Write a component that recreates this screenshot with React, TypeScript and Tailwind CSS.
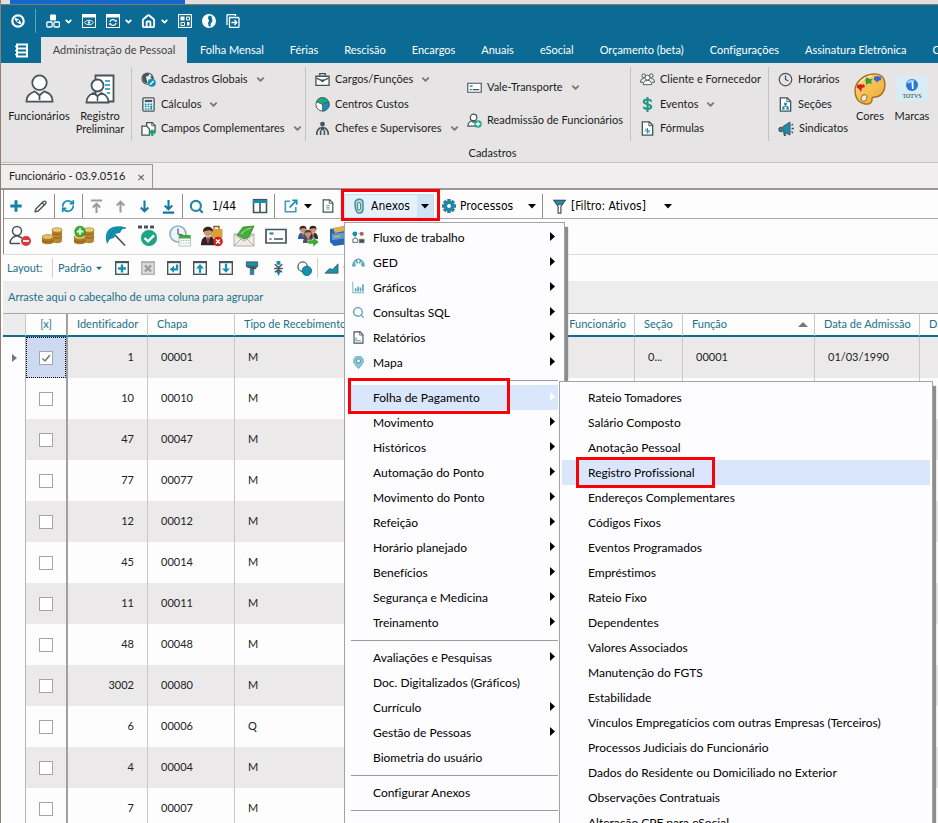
import type { ReactNode } from "react";
import { ChevronDown, Clock, House, Pencil, RefreshCw, Search } from "lucide-react";

const TEAL = "#1690b0";
const DARK = "#45545a";

function Svg({ size = 16, box = 16, children }: { size?: number; box?: number; children: ReactNode }) {
  return (
    <svg width={size} height={size} viewBox={`0 0 ${box} ${box}`} fill="none" className="shrink-0" aria-hidden="true">
      {children}
    </svg>
  );
}

function Caret({ className = "text-black" }: { className?: string }) {
  return (
    <svg width="8" height="5" viewBox="0 0 8 5" className={className} aria-hidden="true">
      <path d="M0 0h8L4 4.500z" fill="currentColor" />
    </svg>
  );
}

/* ---------- title bar icons ---------- */

const CompassIcon = () => (
  <Svg size={14} box={14}>
    <circle cx="7" cy="7" r="5.700" stroke="white" strokeWidth="2.200" />
    <path d="M3.500 4c3 0 6 2 7 6-3 0-6-2-7-6z" fill="white" />
    <circle cx="7" cy="7" r="1" fill="#0b6b94" />
  </Svg>
);

const CubesIcon = () => (
  <Svg size={14} box={14}>
    <rect x="4" y="0.500" width="6" height="6" rx="1" fill="white" />
    <rect x="0.800" y="8" width="5.400" height="5" rx="1" stroke="white" strokeWidth="1.300" />
    <rect x="8" y="8" width="5.400" height="5" rx="1" stroke="white" strokeWidth="1.300" />
  </Svg>
);

const WindowIcon = ({ children }: { children: ReactNode }) => (
  <Svg size={14} box={14}>
    <rect x="0.500" y="0.500" width="13" height="13" stroke="white" />
    <path d="M0 0h14v3.500H0z" fill="white" />
    {children}
  </Svg>
);

const EyeWindowIcon = () => (
  <WindowIcon>
    <path d="M2.500 8.500c2-3 7-3 9 0-2 3-7 3-9 0z" stroke="white" />
    <circle cx="7" cy="8.500" r="1.300" fill="white" />
  </WindowIcon>
);

const SyncWindowIcon = () => (
  <WindowIcon>
    <path d="M4 8a3 2.600 0 0 1 5.600-1M10 9a3 2.600 0 0 1-5.600 1" stroke="white" strokeWidth="1.300" />
    <path d="M10.800 5.500v2.300H8.300zM3.200 11.500V9.200h2.500z" fill="white" />
  </WindowIcon>
);

const TilesIcon = () => (
  <Svg size={14} box={14}>
    <rect x="0.500" y="0.500" width="13" height="13" stroke="white" strokeWidth="1.200" />
    <path d="M2.500 2.500h4v4h-4zM9 8h2.500v3.500H9z" fill="white" />
    <path d="M8.500 3h3v3h-3zM3 8.500h3.500v3H3z" stroke="white" />
  </Svg>
);

const GlobeIcon = () => (
  <Svg size={14} box={14}>
    <circle cx="7" cy="7" r="6.300" stroke="white" strokeWidth="1.400" />
    <path d="M1 4c1-2 4-3.500 6-3.500L6 4l1 3-1 2 1 4.500C3 13 0 9 1 4zM9.500 2l2.500 1c2 3 1 8-3 10l-.5-3 2-3z" fill="white" />
  </Svg>
);

const ExitIcon = () => (
  <Svg size={14} box={14}>
    <path d="M3.500 3.500H12q1 0 1 1v8q0 1-1 1H4.500q-1 0-1-1z" stroke="white" strokeWidth="1.300" />
    <path d="M1 11V1.500q0-1 1-1h7.500v1.500M5.500 8.500H11M8.500 6l2.300 2.500L8.500 11" stroke="white" strokeWidth="1.300" />
  </Svg>
);

const NotebookIcon = () => (
  <Svg size={15} box={15}>
    <path d="M3 1.500h10v12H3zM3 5.500h10M3 9.500h10" stroke="white" strokeWidth="2" />
    <path d="M1 3.500h3M1 7.500h3M1 11.500h3" stroke="white" strokeWidth="1.400" />
  </Svg>
);

/* ---------- ribbon icons ---------- */

const PersonIcon = () => (
  <Svg size={29} box={30}>
    <circle cx="15" cy="9" r="7.500" fill="white" stroke={DARK} strokeWidth="1.800" />
    <path d="M1.500 28.500c0-7 5-9 8.500-10.500l5 4 5-4c4 1.500 8.500 3.500 8.500 10.500z" fill="white" stroke={DARK} strokeWidth="1.800" />
    <path d="M15 22v5" stroke={DARK} strokeWidth="1.800" />
  </Svg>
);

const RecordIcon = () => (
  <Svg size={30} box={30}>
    <path d="M10.500 1.500h18v26h-18z" fill="white" stroke={DARK} strokeWidth="1.800" />
    <path d="M20 7h5M20 11h5M20 15h5M22 19h3" stroke={TEAL} strokeWidth="1.600" />
    <circle cx="12.500" cy="11.500" r="6" fill="white" stroke={DARK} strokeWidth="1.800" />
    <path d="M1.500 28.500c0-5 3-8 7-9.500l4 3 4-3c4 1.500 7 4 7 9.500z" fill="white" stroke={DARK} strokeWidth="1.800" />
    <path d="M12.500 22v5" stroke={DARK} strokeWidth="1.500" />
  </Svg>
);

const WorldPenIcon = () => (
  <Svg size={15}>
    <circle cx="7" cy="7" r="6" fill="#e4e9ea" stroke={DARK} strokeWidth="1.200" />
    <path d="M2 4c2-3 5-3 7-2.500L8 4 5 5l1 3 1 4C3 12 1 9 2 4zM10 4l3 1v3l-2-1z" fill={DARK} />
    <circle cx="11.500" cy="11.500" r="4.200" fill={TEAL} />
    <path d="M9.500 13.500l4-4" stroke="white" strokeWidth="1.500" />
  </Svg>
);

const CalculatorIcon = () => (
  <Svg size={15}>
    <rect x="2" y="1" width="12" height="14" rx="1" fill="white" stroke={DARK} strokeWidth="1.400" />
    <path d="M4 3h8v2.500H4z" fill={DARK} />
    <path d="M4 7h2v2H4zM7 7h2v2H7zM10 7h2v2h-2zM4 9.500h2v1.500H4zM7 9.500h2v1.500H7zM10 9.500h2v4h-2zM4 12h2v1.500H4zM7 12h2v1.500H7z" fill={TEAL} />
  </Svg>
);

const FieldsIcon = () => (
  <Svg size={15}>
    <path d="M6 1.700h6l3 3V11H6z" fill="white" stroke={DARK} strokeWidth="1.400" />
    <path d="M1 5.500h5l3 3V15H1z" fill="white" stroke={DARK} strokeWidth="1.400" />
    <path d="M11.500 1v4H15" stroke={DARK} strokeWidth="1" />
    <path d="M12 9v7M8.500 12.500h7" stroke="#15a67c" strokeWidth="2.400" />
  </Svg>
);

const BriefcaseIcon = () => (
  <Svg size={15}>
    <path d="M1 4.500h14v9.800H1z" fill="white" stroke={DARK} strokeWidth="1.400" />
    <path d="M5 4V1.700h6V4M1.500 6.500L8 9.500l6.500-3" stroke={DARK} strokeWidth="1.400" />
    <path d="M6.500 8h3v2.500h-3z" fill={DARK} />
  </Svg>
);

const PieIcon = () => (
  <Svg size={15}>
    <circle cx="8" cy="8" r="7" fill="white" stroke={DARK} />
    <path d="M8 8L1.500 5A7 7 0 0 1 14.500 5z" fill="#1fa784" stroke={DARK} strokeWidth="0.800" />
    <path d="M8 8l6.500-3A7 7 0 0 1 8 15z" fill={TEAL} stroke={DARK} strokeWidth="0.800" />
  </Svg>
);

const SupervisorIcon = () => (
  <Svg size={15}>
    <circle cx="8" cy="3.300" r="2.600" fill={DARK} />
    <path d="M6 11l.3-5h3.400l.3 5-2-1.500z" fill={DARK} />
    <path d="M2 15v-3q.5-3 4-5M14 15v-3q-.5-3-4-5M6 15v-5M10 15v-5" stroke={DARK} strokeWidth="1.700" />
  </Svg>
);

const CardIcon = () => (
  <Svg size={15}>
    <path d="M.8 3.500h14.400v9.500H.8z" fill="white" stroke={DARK} strokeWidth="1.200" />
    <path d="M3 6.500h3" stroke={TEAL} strokeWidth="1.600" />
    <path d="M3 10.300h2M6 10.300h7" stroke={DARK} strokeWidth="1.200" />
  </Svg>
);

const RehireIcon = () => (
  <Svg size={15}>
    <circle cx="7" cy="4.700" r="3.500" fill="white" stroke={DARK} strokeWidth="1.300" />
    <path d="M1 14c0-4 2-5 4-5.500l2 1.500 2-1.500c2 .5 4 2 4 5.500z" fill="white" stroke={DARK} strokeWidth="1.300" />
    <circle cx="11.700" cy="11.700" r="4" fill="#1fa784" />
    <path d="M11.700 9.300v4.800M9.300 11.700h4.800" stroke="white" strokeWidth="1.400" />
  </Svg>
);

const PeopleIcon = () => (
  <Svg size={15}>
    <circle cx="4" cy="4" r="2" stroke={DARK} />
    <circle cx="12" cy="4" r="2" stroke={DARK} />
    <path d="M.6 11c0-3 1-4 3.400-4M15.400 11c0-3-1-4-3.400-4M.6 11H3M13 11h2.400" stroke={DARK} />
    <circle cx="8" cy="6" r="2.600" fill="white" stroke={DARK} />
    <path d="M3.500 13.500c0-3 2-4.500 4.500-4.500s4.500 1.500 4.500 4.500z" fill="white" stroke={DARK} />
  </Svg>
);

const DollarIcon = () => (
  <Svg size={15}>
    <path d="M12 5c0-3-8-3-8 0s8 2.500 8 5.500-8 3-8 0M8 0v16" stroke="#22967f" strokeWidth="2.200" />
  </Svg>
);

const PageIcon = ({ children, size = 15 }: { children?: ReactNode; size?: number }) => (
  <Svg size={size}>
    <path d="M2.500 1h7.500l3.500 3.500V15h-11z" fill="white" stroke={DARK} strokeWidth="1.400" />
    <path d="M9.500 1v4h4" stroke={DARK} />
    {children}
  </Svg>
);

const MegaphoneIcon = () => (
  <Svg size={16}>
    <path d="M1 7l3-1v5l-3-1zM5 5.500L12 1v13l-7-3.500z" fill={TEAL} stroke={DARK} />
    <path d="M5 11l1 4h2l-.5-3" fill={DARK} />
    <path d="M13.500 4.500L15 3M13.500 7.500H16M13.500 10.500L15 12" stroke={DARK} strokeWidth="1.300" />
  </Svg>
);

const PaletteIcon = () => (
  <Svg size={32} box={32}>
    <defs>
      <linearGradient id="palette" x1="0" y1="0" x2="1" y2="1">
        <stop offset="0" stopColor="#fbd97a" />
        <stop offset="1" stopColor="#f0a62e" />
      </linearGradient>
    </defs>
    <path d="M19 1c8-1 12 4 12 11 0 6-4 12-10 12-3 0-3 1-3 3 0 3-3 4.500-7 4C4 30 1 24 1 18 1 9 9 2 19 1z" fill="url(#palette)" stroke="#a2701f" strokeWidth="1.400" />
    <path d="M18 3c-8 1-14 7-14.500 14" stroke="#fdeab4" strokeWidth="1.500" />
    <ellipse cx="10" cy="25" rx="2.700" ry="3.400" transform="rotate(25 10 25)" fill="#ecebea" stroke="#a2701f" />
    <path d="M3 12l4-1 1 1 2-1 1 3-3 1-1 4-2-3-2-1z" fill="#d8201f" />
    <path d="M11 7l2-3 2 2 4 0-2 2 1 3-3-1-3 2 0-3z" fill="#2f9e3e" />
    <path d="M20 4l3-1 4 1 0 3-3 1-1 2-1-2-2-1z" fill="#3b62d8" />
  </Svg>
);

const BrandIcon = () => (
  <svg width="32" height="25" viewBox="0 0 32 25" aria-hidden="true">
    <path d="M0 0h32v25H0z" fill="#d8ecf4" />
    <circle cx="16" cy="9" r="6" fill="#2a78d6" />
    <path d="M11 7c2-4 6-4 8-2-4 0-4 3-8 2z" fill="#9fd2fb" />
    <path d="M15.500 6l2-1v8h-1.500z" fill="white" />
    <text x="16" y="22" textAnchor="middle" fontFamily="Liberation Serif, serif" fontSize="6" fill="#25303a">TOTVS</text>
  </svg>
);

/* ---------- grid toolbar icons ---------- */

const Arrow = ({ color, flip = false, bar = false }: { color: string; flip?: boolean; bar?: boolean }) => (
  <Svg size={15}>
    <g transform={flip ? "rotate(180 8 8)" : undefined}>
      <path d={bar ? "M8 15V5M4 9l4-4 4 4M2 1.500h12" : "M8 14.500V3M4 7l4-4 4 4"} stroke={color} strokeWidth="2.200" />
    </g>
  </Svg>
);

const PlusIcon = () => (
  <Svg size={14}>
    <path d="M8 1.500v13M1.500 8h13" stroke="#1583a8" strokeWidth="3.400" />
  </Svg>
);

const TableIcon = () => (
  <Svg size={16}>
    <path d="M1.500 2h13v12.500h-13zM8 2v12.500" stroke={DARK} strokeWidth="1.600" />
    <path d="M1 1.500h14V5H1z" fill={TEAL} />
    <path d="M1 1.500h14" stroke={DARK} strokeWidth="1.200" />
  </Svg>
);

const ShareIcon = () => (
  <Svg size={14}>
    <path d="M7 2.500H1.500v12h12V9" stroke="#3e9db0" strokeWidth="1.800" />
    <path d="M6.500 9.500L14 2M9.500 1.500h5v5" stroke={TEAL} strokeWidth="2" />
  </Svg>
);

const ClipIcon = () => (
  <Svg size={16}>
    <path d="M4 4.500C5 0 12 0 12 4.500V12c-1 4-5.500 4-6.500 1L4.500 11z" fill="#bcdcdf" stroke="#4b8f96" strokeWidth="1.500" />
    <path d="M6.500 11V5.500q1.500-2 3 0V11q-1.500 2-3 0z" fill="#e8f4f5" stroke="#4b8f96" strokeWidth="1.200" />
  </Svg>
);

const GearIcon = () => (
  <Svg size={14}>
    <path d="M8 0v16M0 8h16M2.400 2.400l11.200 11.200M13.600 2.400L2.400 13.600" stroke="#2a7f98" strokeWidth="4" />
    <circle cx="8" cy="8" r="6" fill="#2287a6" />
    <circle cx="8" cy="8" r="2.200" fill="white" />
  </Svg>
);

const FunnelIcon = () => (
  <Svg size={15}>
    <path d="M2 1.500h12L9.500 8v7h-3V8z" fill="white" stroke={DARK} strokeWidth="1.300" />
    <path d="M2 1.500h12L10.500 6h-5z" fill={TEAL} stroke={DARK} />
  </Svg>
);

const coins = (
  <>
    <path d="M11 5v11c0 3 10 3 10 0V5z" fill="#b9852f" />
    <path d="M11 8c0 2 10 2 10 0M11 11.500c0 2 10 2 10 0" stroke="#855a1c" strokeWidth="0.800" />
    <ellipse cx="16" cy="5" rx="5" ry="2.200" fill="#edcf74" stroke="#8f6524" strokeWidth="0.600" />
    <path d="M1 12v5c0 3 11.500 3 11.500 0v-5z" fill="#b27b2b" />
    <path d="M1 15c0 2.500 11.500 2.500 11.500 0" stroke="#7c521b" strokeWidth="0.800" />
    <ellipse cx="6.800" cy="12" rx="5.800" ry="2.400" fill="#e6c068" stroke="#8f6524" strokeWidth="0.600" />
  </>
);

const person = (x: number, y: number, hair: string, coat: string) => (
  <g transform={`translate(${x} ${y})`}>
    <path d="M0 14c0-5 2-6.500 5-6.500s5 1.500 5 6.500z" fill={coat} />
    <path d="M3.500 7.500h3L5 12z" fill="#f2f2f2" />
    <path d="M4.500 8h1l.5 2.500L5 13l-1-2.500z" fill="#c93b2b" />
    <circle cx="5" cy="4.200" r="3.300" fill="#c99873" />
    <path d="M1.500 4.500C1-.5 9-.5 8.500 4.500 7 2.500 4 3 1.500 4.500z" fill={hair} />
  </g>
);

const actions = [
  {
    label: "Demissão",
    icon: (
      <>
        <circle cx="8" cy="6" r="4.500" stroke={DARK} strokeWidth="1.500" />
        <path d="M1 18.500c0-5 3-6.500 6-7.500h2l4 2M1 18.500h10" stroke={DARK} strokeWidth="1.500" />
        <circle cx="17" cy="16" r="5" fill="#d83a3a" />
        <path d="M14 16h6" stroke="white" strokeWidth="1.800" />
      </>
    ),
  },
  { label: "Financeiro", icon: coins },
  {
    label: "Adicionar valores",
    icon: (
      <>
        {coins}
        <circle cx="7" cy="6.500" r="5.300" fill="#35b52a" stroke="#1f8a1c" strokeWidth="0.700" />
        <path d="M7 3.300v6.400M3.800 6.500h6.400" stroke="white" strokeWidth="1.800" />
      </>
    ),
  },
  {
    label: "Férias",
    icon: (
      <>
        <path d="M10 10l10 10.500" stroke={DARK} strokeWidth="1.700" />
        <path d="M2 19C-1 10 2 4 8 2c5-1.500 10-1 13.500 1L17 4l-2 4-4 .5L9 13l-4 1z" fill={TEAL} />
        <path d="M5 14C5 9 8 5 13 2M11 8.500C13 6 15 4 21 3" stroke="#0c6f8c" strokeWidth="0.700" />
      </>
    ),
  },
  {
    label: "Aprovação",
    icon: (
      <>
        <path d="M1 .5h4v3H1zM7 .5h4v3H7zM13 .5h4v3h-4z" fill={DARK} />
        <circle cx="12" cy="13" r="8.500" fill="#1aa583" stroke="white" strokeWidth="0.800" />
        <path d="M7.500 13l3.500 3.300 6-6" stroke="white" strokeWidth="2.400" />
      </>
    ),
  },
  {
    label: "Agenda",
    icon: (
      <>
        <circle cx="9" cy="9" r="8" fill="#eef4fa" stroke="#8fb0cc" strokeWidth="1.700" />
        <path d="M9 3.500V9l5 1" stroke="#4a5d6d" strokeWidth="1.200" />
        <path d="M10 11h11.500v10H10z" fill="white" stroke="#9aa5aa" strokeWidth="0.700" />
        <path d="M10 10h11.500v3.500H10z" fill="#3fa83c" />
        <path d="M11.500 15.500h9M11.500 18h9" stroke="#a7bba9" strokeWidth="1" strokeDasharray="1.500 1" />
      </>
    ),
  },
  {
    label: "Rescisão",
    icon: (
      <>
        <path d="M10 4h11.500v9H10z" fill="#dba03a" />
        <path d="M13 4V1.500h5V4" stroke="#8b5d1b" strokeWidth="1.300" />
        <g transform="scale(1.400)">{person(0, 0.5, "#33251e", "#252530")}</g>
        <circle cx="17" cy="16.500" r="4.800" fill="#cf2020" />
        <path d="M15 14.500l4 4M19 14.500l-4 4" stroke="white" strokeWidth="1.500" />
      </>
    ),
  },
  {
    label: "Mensagens",
    icon: (
      <>
        <path d="M1 9h20v12H1z" fill="#eeeae4" stroke="#a59f95" strokeWidth="0.800" />
        <path d="M4 10l6-8 11-1-5 11-5 2z" fill="#48ab3d" stroke="#2c7f2a" strokeWidth="0.700" />
        <path d="M8 9c3-3 6-5 10-6" stroke="#9bdc88" strokeWidth="1.200" />
        <path d="M1 9l10 7 10-7M1 21l7-7M21 21l-7-7" stroke="#a59f95" strokeWidth="0.800" />
      </>
    ),
  },
  {
    label: "Crachá",
    icon: (
      <>
        <path d="M1 4.500h20v13.500H1z" fill="white" stroke={DARK} strokeWidth="1.700" />
        <path d="M4.500 8.500h4" stroke={TEAL} strokeWidth="2.200" />
        <path d="M4.500 14h2M9 14h9" stroke={DARK} strokeWidth="1.500" />
      </>
    ),
  },
  {
    label: "Transferência",
    icon: (
      <>
        {person(1, 0, "#3b2a20", "#285c9c")}
        {person(11, 0, "#2d211c", "#30303a")}
        {person(6, 4, "#5e4028", "#4b5056")}
        <path d="M11 15h5v-3l6 5-6 5v-3h-5z" fill="#3aaa35" stroke="#fff" strokeWidth="0.500" />
      </>
    ),
  },
  {
    label: "Carteira",
    icon: (
      <>
        <path d="M1 4l14-3 5 4v14l-15 2-4-4z" fill="#2768b5" />
        <path d="M4 3l11-2 5 4-14 3z" fill="#e2b143" />
        <path d="M3 9l17-2v6L3 15z" fill="#5f9bdc" />
        <path d="M5 12l6-1" stroke="#e2b143" strokeWidth="1.500" />
      </>
    ),
  },
];

const Boxed = ({ children, muted = false }: { children: ReactNode; muted?: boolean }) => (
  <Svg size={14}>
    <rect x="0.800" y="0.800" width="14.400" height="14.400" fill={muted ? "#dcdcdc" : "white"} stroke={muted ? "#b4b4b4" : DARK} strokeWidth="1.600" />
    <path d="M0 1.500h16" stroke={muted ? "#b4b4b4" : DARK} strokeWidth="2" />
    {children}
  </Svg>
);

const layoutActions = [
  { label: "Novo layout", icon: <Boxed><path d="M8 4v9M3.500 8.500h9" stroke={TEAL} strokeWidth="2.800" /></Boxed> },
  { label: "Excluir layout", icon: <Boxed muted><path d="M4.500 5l7 7M11.500 5l-7 7" stroke="#9b9b9b" strokeWidth="2.600" /></Boxed> },
  { label: "Restaurar layout", icon: <Boxed><path d="M11.500 4v5.500H6" stroke={TEAL} strokeWidth="2.600" /><path d="M8 5.500v8L3 9.500z" fill={TEAL} /></Boxed> },
  { label: "Exportar layout", icon: <Boxed><path d="M8 13.500V6" stroke={TEAL} strokeWidth="2.600" /><path d="M3.500 8.500L8 3.500l4.500 5z" fill={TEAL} /></Boxed> },
  { label: "Importar layout", icon: <Boxed><path d="M8 3v6" stroke={TEAL} strokeWidth="2.600" /><path d="M3.500 8.500l4.500 5 4.500-5z" fill={TEAL} /></Boxed> },
  {
    label: "Formatar",
    icon: (
      <Svg size={14}>
        <path d="M1.500 1h13v5h-13z" fill={TEAL} stroke={DARK} />
        <path d="M1.500 6h13l-2.500 3.500H6V8H3z" fill={DARK} />
        <path d="M6 9h4v6.500H6z" fill={TEAL} stroke={DARK} strokeWidth="0.800" />
      </Svg>
    ),
  },
  {
    label: "Ajustar colunas",
    icon: (
      <Svg size={15}>
        <path d="M6 0h4v4H6zM5 10h6l-3 6z" fill={TEAL} />
        <path d="M4 3.500L8 7l4-3.500M3.500 8h9M4 12l4-2.500 4 2.500" stroke={DARK} strokeWidth="1.500" />
      </Svg>
    ),
  },
  {
    label: "Cores condicionais",
    icon: (
      <Svg size={15}>
        <circle cx="6" cy="6" r="5" fill="white" stroke={DARK} strokeWidth="1.300" />
        <circle cx="10.500" cy="10.500" r="5" fill={TEAL} stroke="#0f7391" />
      </Svg>
    ),
  },
];

/* ---------- ribbon ---------- */

const tabs = ["Folha Mensal", "Férias", "Rescisão", "Encargos", "Anuais", "eSocial", "Orçamento (beta)", "Configurações", "Assinatura Eletrônica", "C"];

function RibbonItem({ icon, label, menu = false }: { icon: ReactNode; label: string; menu?: boolean }) {
  return (
    <button type="button" className="flex h-[25px] items-center gap-[5px] whitespace-nowrap">
      {icon}
      <span>{label}</span>
      {menu && <ChevronDown size={11} strokeWidth={4} className="ml-0.5 text-[#777]" />}
    </button>
  );
}

function BigButton({ icon, label, className }: { icon: ReactNode; label: string; className: string }) {
  return (
    <button type="button" className={`flex shrink-0 flex-col items-center pt-[5px] leading-[13px] ${className}`}>
      <span className="flex h-[33px] items-center">{icon}</span>
      <span className="mt-1">{label}</span>
    </button>
  );
}

function Ribbon() {
  return (
    <section aria-label="Cadastros" className="h-[100px] overflow-hidden border-b border-[#c3c1c2] bg-[#e6e4e5] pt-1 text-[#1c1c1c]">
      <div className="flex h-[74px] pl-px">
        <div className="flex w-[130px] shrink-0 border-r border-[#c4c2c3] pl-1">
          <BigButton icon={<PersonIcon />} label="Funcionários" className="w-[66px]" />
          <BigButton icon={<RecordIcon />} label="Registro Preliminar" className="w-[56px]" />
        </div>
        <div className="flex w-[174px] shrink-0 flex-col border-r border-[#c4c2c3] pl-[9px]">
          <RibbonItem icon={<WorldPenIcon />} label="Cadastros Globais" menu />
          <RibbonItem icon={<CalculatorIcon />} label="Cálculos" menu />
          <RibbonItem icon={<FieldsIcon />} label="Campos Complementares" menu />
        </div>
        <div className="flex w-[161px] shrink-0 flex-col pl-[9px]">
          <RibbonItem icon={<BriefcaseIcon />} label="Cargos/Funções" menu />
          <RibbonItem icon={<PieIcon />} label="Centros Custos" />
          <RibbonItem icon={<SupervisorIcon />} label="Chefes e Supervisores" menu />
        </div>
        <div className="flex w-[164px] shrink-0 flex-col gap-2 border-r border-[#c4c2c3] pt-2">
          <RibbonItem icon={<CardIcon />} label="Vale-Transporte" menu />
          <RibbonItem icon={<RehireIcon />} label="Readmissão de Funcionários" />
        </div>
        <div className="flex w-[138px] shrink-0 flex-col border-r border-[#c4c2c3] pl-[9px]">
          <RibbonItem icon={<PeopleIcon />} label="Cliente e Fornecedor" />
          <RibbonItem icon={<DollarIcon />} label="Eventos" menu />
          <RibbonItem icon={<PageIcon><path d="M5 10.500h6M8 7.500v6M5.500 8l5 5" stroke={TEAL} /></PageIcon>} label="Fórmulas" />
        </div>
        <div className="flex w-[80px] shrink-0 flex-col pl-[9px]">
          <RibbonItem icon={<Clock size={15} color={DARK} />} label="Horários" />
          <RibbonItem icon={<PageIcon><path d="M6.500 6h3v2.500h-3zM4.500 11H7v2.500H4.500zM9 11h2.500v2.500H9z" fill={TEAL} /><path d="M8 8v2H5.500v2M8 10h2.500v2" stroke={TEAL} /></PageIcon>} label="Seções" />
          <RibbonItem icon={<MegaphoneIcon />} label="Sindicatos" />
        </div>
        <BigButton icon={<PaletteIcon />} label="Cores" className="w-[42px]" />
        <BigButton icon={<BrandIcon />} label="Marcas" className="w-[42px]" />
      </div>
      <p className="ml-[46px] pt-1 text-center leading-4">Cadastros</p>
    </section>
  );
}

function Header() {
  return (
    <header className="bg-[#0b6b94] text-white">
      <div className="flex h-8 items-center pl-[10px]">
        <CompassIcon />
        <span className="mx-[10px] h-6 w-px bg-[#5fa0bb]" />
        <button type="button" aria-label="Módulos" className="flex items-center gap-1"><CubesIcon /><ChevronDown size={9} strokeWidth={5} /></button>
        <button type="button" aria-label="Visões" className="ml-[9px]"><EyeWindowIcon /></button>
        <button type="button" aria-label="Atualizar visões" className="ml-[10px] flex items-center gap-1"><SyncWindowIcon /><ChevronDown size={9} strokeWidth={5} /></button>
        <button type="button" aria-label="Início" className="ml-[8px] flex items-center gap-1"><House size={15} strokeWidth={3} /><ChevronDown size={9} strokeWidth={5} /></button>
        <button type="button" aria-label="Painéis" className="ml-[9px]"><TilesIcon /></button>
        <button type="button" aria-label="Portal" className="ml-[10px]"><GlobeIcon /></button>
        <button type="button" aria-label="Sair" className="ml-[10px]"><ExitIcon /></button>
      </div>
      <nav className="flex h-[26px] overflow-hidden">
        <button type="button" aria-label="Menu" className="flex w-10 shrink-0 items-center justify-center"><NotebookIcon /></button>
        <button type="button" className="w-[146px] shrink-0 bg-[#e6e4e5] text-[#454545]">Administração de Pessoal</button>
        {tabs.map((tab) => (
          <button key={tab} type="button" className="shrink-0 px-[13px] whitespace-nowrap">{tab}</button>
        ))}
      </nav>
    </header>
  );
}

/* ---------- menus ---------- */

const line = "#5aa5b8";

const attachItems = [
  { label: "Fluxo de trabalho", icon: <Svg size={13}><circle cx="3.500" cy="3.500" r="3" fill={TEAL} /><circle cx="12" cy="3.500" r="2.500" fill="#b65f62" /><path d="M1 10l3-1.500L7 10v4H1z" stroke={DARK} /><path d="M9 10h6v4.500H9zM8 3h3M4 6v3" fill={DARK} stroke={DARK} strokeWidth="0.500" /></Svg> },
  { label: "GED", icon: <Svg size={13}><path d="M1 13c0-4 1-6 4-8 3-2 5-1 7 1 2 2 3 4 3 7M5 5l2 4M11 5L9 9M4 9l-1 4M12 9l1 4" stroke={line} strokeWidth="2" /></Svg> },
  { label: "Gráficos", icon: <Svg size={13}><path d="M1 1v13.500h14" stroke={line} /><path d="M4.500 13V9M7.500 13V7M10.500 13V8M13.500 13V4" stroke={line} strokeWidth="2" /></Svg> },
  { label: "Consultas SQL", icon: <Search size={13} color={line} strokeWidth={2.500} /> },
  { label: "Relatórios", icon: <PageIcon size={13}><path d="M5 8v4h6" stroke={line} strokeWidth="1.500" /></PageIcon> },
  { label: "Mapa", icon: <Svg size={13}><path d="M8 15.500C3 10 2 8 2 6a6 6 0 0 1 12 0c0 2-1 4-6 9.500z" fill="#8fc9d8" stroke={line} /><circle cx="8" cy="6" r="2.500" fill="white" stroke={line} strokeWidth="1.500" /></Svg> },
];

const payrollItems = [
  "Rateio Tomadores",
  "Salário Composto",
  "Anotação Pessoal",
  "Registro Profissional",
  "Endereços Complementares",
  "Códigos Fixos",
  "Eventos Programados",
  "Empréstimos",
  "Rateio Fixo",
  "Dependentes",
  "Valores Associados",
  "Manutenção do FGTS",
  "Estabilidade",
  "Vínculos Empregatícios com outras Empresas (Terceiros)",
  "Processos Judiciais do Funcionário",
  "Dados do Residente ou Domiciliado no Exterior",
  "Observações Contratuais",
  "Alteração CPF para eSocial",
];

const moduleItems = [
  "Movimento",
  "Históricos",
  "Automação do Ponto",
  "Movimento do Ponto",
  "Refeição",
  "Horário planejado",
  "Benefícios",
  "Segurança e Medicina",
  "Treinamento",
];

function MenuItem({ label, icon, arrow = true, active = false }: { label: string; icon?: ReactNode; arrow?: boolean; active?: boolean }) {
  return (
    <button type="button" role="menuitem" className={`flex h-[25px] w-full items-center pr-[3px] text-left ${active ? "bg-[#dae6fb]" : ""}`}>
      <span className="flex w-[22px] shrink-0 pl-px">{icon}</span>
      <span className="flex-1">{label}</span>
      {arrow && (
        <svg width="5" height="9" viewBox="0 0 5 9" className={`mb-0.5 ${active ? "text-white" : "text-black"}`} aria-hidden="true">
          <path d="M0 0l5 4.500L0 9z" fill="currentColor" />
        </svg>
      )}
    </button>
  );
}

const MenuRule = () => (
  <div className="flex h-[10px] items-center">
    <hr className="w-full border-[#9c9c9c]" />
  </div>
);

function PayrollMenu() {
  return (
    <ul role="menu" className="absolute -top-1 left-[208px] w-[374px] border border-[#a3a3a3] bg-[#fdfcfe] px-0.5 pt-[3px] shadow-[3px_5px_1px_#8d8d8d]">
      {payrollItems.map((item) => (
        <li key={item} className={`relative ${item === "Registro Profissional" ? "bg-[#dae6fb]" : ""}`}>
          <button type="button" role="menuitem" className="h-[25px] w-full pl-[26px] text-left whitespace-nowrap">{item}</button>
          {item === "Registro Profissional" && (
            <span className="pointer-events-none absolute -top-[3px] left-[14px] h-[31px] w-[139px] border-3 border-[#fb0007]" />
          )}
        </li>
      ))}
    </ul>
  );
}

function AttachMenu() {
  return (
    <div role="menu" className="absolute top-full left-0 z-10 mt-1 w-[221px] border border-[#a3a3a3] bg-[#fdfcfe] px-1.5 pt-0.5 pb-8 font-[Lato,sans-serif] text-xs text-black shadow-[3px_5px_1px_#8d8d8d]">
      {attachItems.map((item) => <MenuItem key={item.label} {...item} />)}
      <MenuRule />
      <div className="relative">
        <MenuItem label="Folha de Pagamento" active />
        <span className="pointer-events-none absolute -top-[7px] -left-[3px] h-9 w-[162px] border-3 border-[#fb0007]" />
        <PayrollMenu />
      </div>
      {moduleItems.map((label) => <MenuItem key={label} label={label} />)}
      <MenuRule />
      <MenuItem label="Avaliações e Pesquisas" />
      <MenuItem label="Doc. Digitalizados (Gráficos)" arrow={false} />
      <MenuItem label="Currículo" />
      <MenuItem label="Gestão de Pessoas" />
      <MenuItem label="Biometria do usuário" arrow={false} />
      <MenuRule />
      <MenuItem label="Configurar Anexos" arrow={false} />
      <MenuRule />
    </div>
  );
}

/* ---------- toolbars ---------- */

function ToolButton({ label, children }: { label: string; children: ReactNode }) {
  return (
    <button type="button" aria-label={label} className="flex h-full w-6 shrink-0 items-center justify-center">
      {children}
    </button>
  );
}

const Divider = () => (
  <span className="flex w-1 shrink-0 justify-center self-stretch">
    <span className="w-px bg-[#8f8f8f]" />
  </span>
);

function MainToolbar() {
  return (
    <div role="toolbar" className="flex h-[29px] items-center border-b border-[#a8a8a8] bg-[#fdfdfd] pt-1 font-['DejaVu_Sans_Condensed','DejaVu_Sans',sans-serif] text-xs whitespace-nowrap text-black">
      <ToolButton label="Incluir"><PlusIcon /></ToolButton>
      <ToolButton label="Editar"><Pencil size={13} color={DARK} strokeWidth={2.500} /></ToolButton>
      <Divider />
      <ToolButton label="Atualizar"><RefreshCw size={14} color={TEAL} strokeWidth={3} /></ToolButton>
      <Divider />
      <ToolButton label="Primeiro"><Arrow color="#9c9c9c" bar /></ToolButton>
      <ToolButton label="Anterior"><Arrow color="#9c9c9c" /></ToolButton>
      <ToolButton label="Próximo"><Arrow color="#1478a0" flip /></ToolButton>
      <ToolButton label="Último"><Arrow color="#1478a0" flip bar /></ToolButton>
      <Divider />
      <ToolButton label="Localizar"><Search size={15} color="#2488a2" strokeWidth={3.500} /></ToolButton>
      <span className="w-10 shrink-0 pl-1">1/44</span>
      <ToolButton label="Colunas"><TableIcon /></ToolButton>
      <Divider />
      <button type="button" aria-label="Exportar" className="flex h-full shrink-0 items-center gap-1.5 pr-1 pl-2"><ShareIcon /><Caret /></button>
      <ToolButton label="Relatório"><PageIcon size={14}><path d="M6 7.500h4M6 9.500h4M6 11.500h4" stroke="#55a08e" /></PageIcon></ToolButton>
      <div className="relative ml-1 h-full shrink-0">
        <button type="button" aria-haspopup="menu" className="flex h-full w-[90px] items-center border border-[#c7ddec] bg-[#e6f2fb] pl-1.5">
          <ClipIcon />
          <span className="flex-1 pl-1 text-left">Anexos</span>
          <span className="flex h-full w-4 items-center justify-center bg-[#cfe5f6]"><Caret /></span>
        </button>
        <AttachMenu />
        <span className="pointer-events-none absolute -top-[5px] -left-[3px] z-20 h-8 w-[99px] border-3 border-[#fb0007]" />
      </div>
      <button type="button" className="ml-2 flex h-full shrink-0 items-center pr-1">
        <GearIcon />
        <span className="w-[72px] pl-1 text-left">Processos</span>
        <Caret />
      </button>
      <Divider />
      <button type="button" className="ml-2 flex h-full shrink-0 items-center">
        <FunnelIcon />
        <span className="w-[97px] pl-1 text-left">[Filtro: Ativos]</span>
        <Caret />
      </button>
    </div>
  );
}

function LayoutBar() {
  return (
    <div role="toolbar" className="flex h-[27px] items-center border-t border-[#dcdcdc] bg-[#fdfdfd] pl-1 text-[#22708a]">
      <span className="w-[45px] shrink-0">Layout:</span>
      <span className="h-5 w-px bg-[#cfcfcf]" />
      <button type="button" className="ml-[5px] flex w-[51px] shrink-0 items-center gap-1">Padrão<Caret className="w-1.5 text-[#22708a]" /></button>
      {layoutActions.map((action) => (
        <button key={action.label} type="button" aria-label={action.label} className="flex w-[26px] shrink-0 justify-center">{action.icon}</button>
      ))}
      <span className="h-5 w-px bg-[#cfcfcf]" />
      <button type="button" aria-label="Gráfico" className="ml-1.5 flex items-center gap-1">
        <Svg size={15}><path d="M1 13l5-5 3 1 6-6v10z" fill={TEAL} stroke={DARK} strokeWidth="0.800" /></Svg>
        <Caret className="w-1.5 text-[#22708a]" />
      </button>
    </div>
  );
}

/* ---------- employee grid ---------- */

const employees = [
  { id: "1", code: "00001", pay: "M", section: "0...", role: "00001", admission: "01/03/1990" },
  { id: "10", code: "00010", pay: "M" },
  { id: "47", code: "00047", pay: "M" },
  { id: "77", code: "00077", pay: "M" },
  { id: "12", code: "00012", pay: "M" },
  { id: "45", code: "00014", pay: "M" },
  { id: "11", code: "00011", pay: "M" },
  { id: "48", code: "00048", pay: "M" },
  { id: "3002", code: "00080", pay: "M" },
  { id: "6", code: "00006", pay: "Q" },
  { id: "4", code: "00004", pay: "M" },
  { id: "7", code: "00007", pay: "M" },
];

const headCell = "border-r border-[#c8c8c8] pl-[9px] text-left font-normal whitespace-nowrap overflow-hidden";
const bodyCell = "border-r border-[#c8c8c8] pl-[13px]";

function EmployeeGrid() {
  return (
    <table className="w-full table-fixed border-separate border-spacing-0">
      <colgroup>
        <col className="w-[23px]" />
        <col className="w-[42px]" />
        <col className="w-[80px]" />
        <col className="w-[87px]" />
        <col className="w-[122px]" />
        <col className="w-[278px]" />
        <col className="w-[48px]" />
        <col className="w-[132px]" />
        <col className="w-[105px]" />
        <col />
      </colgroup>
      <thead>
        <tr className="h-6 text-[#22708a] *:border-t *:border-b-2 *:border-t-[#a8a8a8] *:border-b-[#0f6d8e]">
          <th className="border-r border-[#c8c8c8] bg-[#ececec]" />
          <th className="border-r-2 border-[#a0a0a0] bg-[#fdfdfd] font-normal">[x]</th>
          <th className={headCell}>Identificador</th>
          <th className={headCell}>Chapa</th>
          <th className={headCell}>Tipo de Recebimento</th>
          <th className="border-r border-[#c8c8c8] pr-2 text-right font-normal">Tipo de Funcionário</th>
          <th className={headCell}>Seção</th>
          <th className={headCell}>
            <span className="flex items-center justify-between pr-1.5">
              Função
              <svg width="10" height="5" viewBox="0 0 10 5" aria-hidden="true"><path d="M5 0l5 5H0z" fill="#777" /></svg>
            </span>
          </th>
          <th className={headCell}>Data de Admissão</th>
          <th className="overflow-hidden pl-[9px] text-left font-normal whitespace-nowrap">Da</th>
        </tr>
      </thead>
      <tbody>
        {employees.map((e, i) => (
          <tr key={e.id} className={`h-[41px] ${i % 2 === 0 ? "bg-[#ebe9ea]" : "bg-[#fdfdfd]"}`}>
            <td className="border-r border-[#b5b5b5] bg-[#fdfdfd]">
              {i === 0 && <svg width="5" height="8" viewBox="0 0 5 8" className="mx-auto" aria-hidden="true"><path d="M0 0l5 4-5 4z" fill="#777" /></svg>}
            </td>
            <td className="border-r-2 border-[#a0a0a0] p-0">
              <label className={`flex h-[41px] items-center justify-center ${i === 0 ? "border border-dotted border-black bg-[#ccd9f1]" : ""}`}>
                <span className="grid *:[grid-area:1/1]">
                  <input type="checkbox" defaultChecked={i === 0} aria-label={`Selecionar ${e.code}`} className="peer size-[14px] appearance-none border border-[#a5a5a5] bg-white" />
                  <svg width="14" height="14" viewBox="0 0 14 14" fill="none" className="pointer-events-none invisible peer-checked:visible" aria-hidden="true">
                    <path d="M3.500 7.500l2.500 2.500 5-6" stroke="#777" strokeWidth="1.500" />
                  </svg>
                </span>
              </label>
            </td>
            <td className="border-r border-[#c8c8c8] pr-[13px] text-right">{e.id}</td>
            <td className={bodyCell}>{e.code}</td>
            <td className={bodyCell}>{e.pay}</td>
            <td className={bodyCell} />
            <td className={bodyCell}>{e.section}</td>
            <td className={bodyCell}>{e.role}</td>
            <td className={bodyCell}>{e.admission}</td>
            <td />
          </tr>
        ))}
      </tbody>
    </table>
  );
}

export default function App() {
  return (
    <div className="flex h-screen flex-col overflow-hidden border-l border-[#8f8178] bg-[#fdfdfd] font-[Lato,'Liberation_Sans',sans-serif] text-[11px] text-[#222] [font-variant-ligatures:none]">
      <div className="h-[5px] shrink-0 border-b border-[#857b72] bg-[#e2dedc] pl-[9px]">
        <div className="h-1 w-[175px] bg-[#1467cc]" />
      </div>
      <Header />
      <Ribbon />

      <div className="flex h-[27px] shrink-0 border-b-2 border-[#979797] bg-[#f0eeef]">
        <div className="mt-px flex w-[152px] items-center justify-between border-t border-r border-[#979797] pr-[7px] pl-2">
          <span>Funcionário - 03.9.0516</span>
          <button type="button" aria-label="Fechar" className="text-sm leading-none text-[#555]">×</button>
        </div>
      </div>

      <main className="ml-0.5 min-h-0 flex-1">
        <div className="border-l border-[#8f8f8f]">
          <MainToolbar />
          <div role="toolbar" className="flex h-[35px] items-center pb-0.5">
            {actions.map((action) => (
              <button key={action.label} type="button" aria-label={action.label} className="flex w-8 shrink-0 justify-center">
                <Svg size={22} box={22}>{action.icon}</Svg>
              </button>
            ))}
          </div>
        </div>
        <LayoutBar />
        <p className="flex h-8 items-center bg-[#eeedee] pl-[5px] text-[#22708a]">Arraste aqui o cabeçalho de uma coluna para agrupar</p>
        <EmployeeGrid />
      </main>
    </div>
  );
}
